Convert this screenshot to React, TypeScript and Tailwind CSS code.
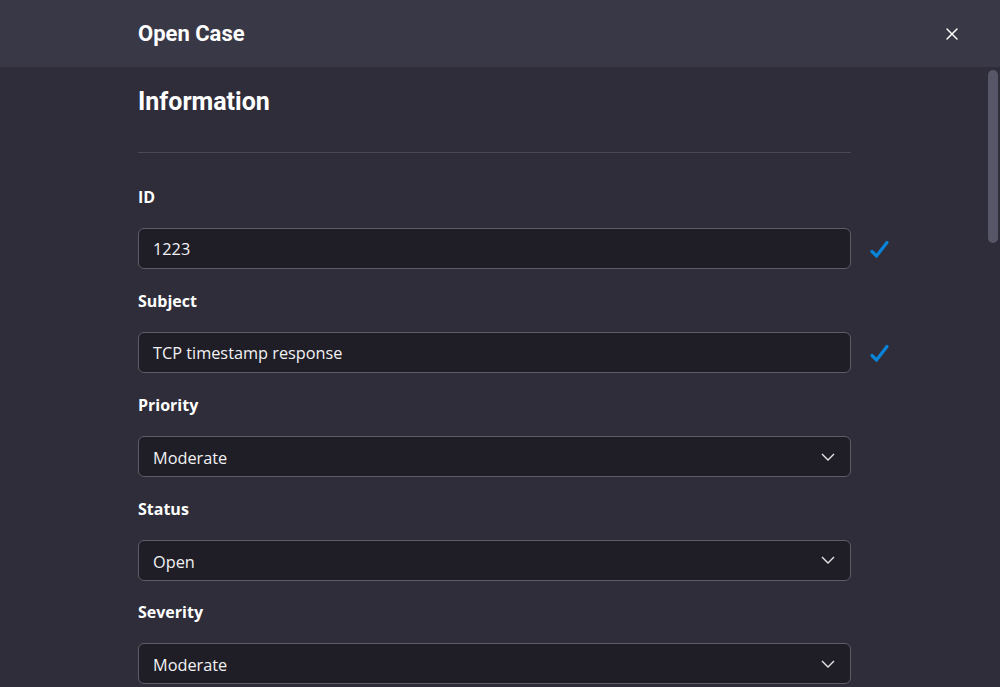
import { X } from "lucide-react";

const ui = { fontFamily: '"Open Sans", "Noto Sans", Arial, sans-serif' };
const head = { fontFamily: 'Roboto, "Liberation Sans", Arial, sans-serif' };

function Check() {
  return (
    <svg width="22" height="22" viewBox="0 0 22 22" className="shrink-0">
      <path d="M3 13.5 L7.5 18 L18 4.5" fill="none" stroke="#0a84d9" strokeWidth="3.2" strokeLinecap="round" strokeLinejoin="round" />
    </svg>
  );
}

function Chevron() {
  return (
    <svg width="14" height="10" viewBox="0 0 14 10">
      <path d="M1 2 L7 8 L13 2" fill="none" stroke="#e6e6ea" strokeWidth="1.4" />
    </svg>
  );
}

function TextField({ label, value }: { label: string; value: string }) {
  return (
    <div className="pb-5">
      <label className="block text-base font-bold leading-6 text-white">{label}</label>
      <div className="mt-[19px] flex items-center gap-[18px]">
        <div className="flex h-[41px] w-[713px] items-center rounded-md border border-[#5e5d67] bg-[#1f1e26] px-[14px] pt-[2px] text-[16.3px] text-[#f2f2f4]">
          {value}
        </div>
        <Check />
      </div>
    </div>
  );
}

function SelectField({ label, value }: { label: string; value: string }) {
  return (
    <div className="pb-[19.5px]">
      <label className="block text-base font-bold leading-6 text-white">{label}</label>
      <div className="mt-[19px] flex h-[41px] w-[713px] items-center justify-between rounded-md border border-[#5e5d67] bg-[#1f1e26] pl-[14px] pr-[15px] text-[16.3px] text-[#f2f2f4]">
        <span className="pt-[4px]">{value}</span>
        <Chevron />
      </div>
    </div>
  );
}

export default function App() {
  return (
    <div className="flex h-[687px] w-full flex-col overflow-hidden bg-[#2e2d39]" style={ui}>
      <header className="flex h-[67px] shrink-0 items-center justify-between bg-[#393847] pl-[138px] pr-[38px]">
        <h1 className="text-[22px] font-bold text-white" style={head}>Open Case</h1>
        <X size={20} strokeWidth={1.7} className="text-white" />
      </header>
      <div className="relative flex-1 overflow-hidden">
        <div className="absolute right-[2px] top-[3px] h-[173px] w-[10px] rounded-full bg-[#575669]" />
        <div className="pl-[138px] pt-[19px]">
          <h2 className="text-[25px] font-bold leading-8 text-white" style={head}>Information</h2>
          <div className="mt-[34px] h-px w-[713px] bg-[#4a4957]" />
          <div className="pt-8">
            <TextField label="ID" value="1223" />
            <TextField label="Subject" value="TCP timestamp response" />
            <SelectField label="Priority" value="Moderate" />
            <SelectField label="Status" value="Open" />
            <SelectField label="Severity" value="Moderate" />
          </div>
        </div>
      </div>
    </div>
  );
}
